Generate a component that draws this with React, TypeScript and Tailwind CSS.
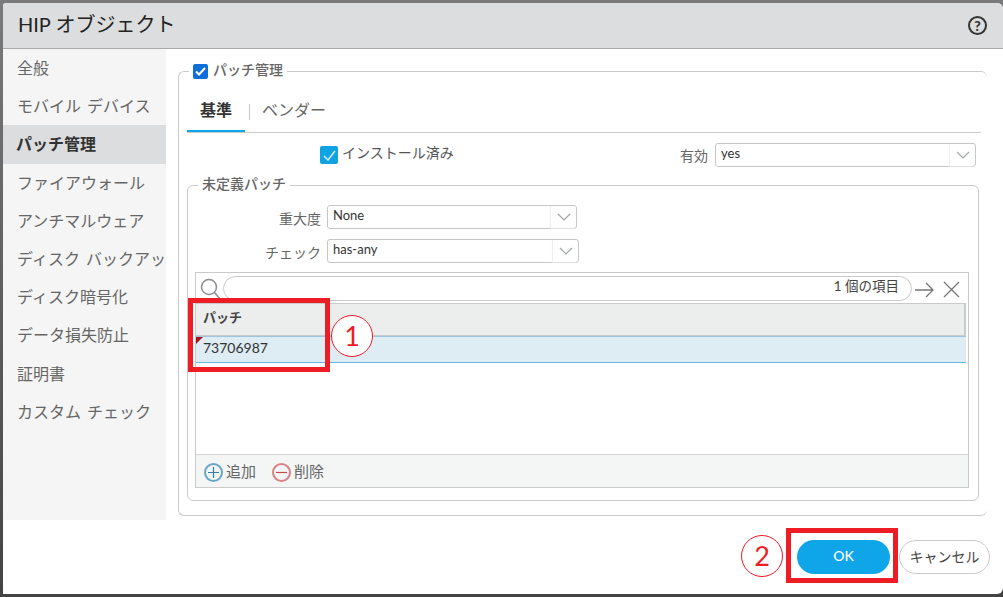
import type { ReactNode } from 'react';

const FONT = "font-['Lato','Noto_Sans_CJK_JP',sans-serif]";

const navItems = [
  '全般',
  'モバイル デバイス',
  'パッチ管理',
  'ファイアウォール',
  'アンチマルウェア',
  'ディスク バックアップ',
  'ディスク暗号化',
  'データ損失防止',
  '証明書',
  'カスタム チェック',
];

const Chevron = () => (
  <svg width="14" height="8" viewBox="0 0 14 8" fill="none" stroke="#a0a5a8" strokeWidth="1.2">
    <path d="M1 1l6 6 6-6" />
  </svg>
);

const Select = ({ value, className }: { value: string; className: string }) => (
  <div className={`flex h-6 rounded-[3px] border border-[#c4c6c8] bg-white ${className}`}>
    <div className="flex-1 pl-[5px] text-[13px] leading-[19px] text-[#333]">{value}</div>
    <div className="flex w-[26px] items-center justify-center rounded-r-[3px] border-l border-[#efefef] shadow-[0_1px_1px_#e4e5e6]">
      <Chevron />
    </div>
  </div>
);

const Field = ({
  label,
  className,
  legendClass,
  children,
}: {
  label: ReactNode;
  className: string;
  legendClass: string;
  children: ReactNode;
}) => (
  <fieldset className={`min-w-0 rounded-[6px] border border-[#c9cacb] ${className}`}>
    <legend className={`flex h-4 items-center gap-[5px] px-[4px] text-[14px] font-medium text-[#666] ${legendClass}`}>
      {label}
    </legend>
    {children}
  </fieldset>
);

const CircleNumber = ({ n, className }: { n: string; className: string }) => (
  <div
    className={`absolute flex h-[42px] w-[42px] items-center justify-center rounded-full border border-[#ee1c25] bg-white text-[27px] font-normal text-[#ee1c25] ${className}`}
  >
    {n}
  </div>
);

export default function App() {
  return (
    <div className={`relative h-[597px] w-[1003px] overflow-hidden bg-gradient-to-b from-[#7a7a7a] to-[#444] pb-[3px] pl-[3px] pt-[3px] ${FONT}`}>
      <div className="flex h-full flex-col overflow-hidden rounded-r-[6px] rounded-tl-[3px] bg-white">
        {/* Title bar */}
        <div className="flex h-[46px] shrink-0 items-center justify-between border-b border-[#a9abae] bg-[#dcddde] pl-[15px] pr-[16px]">
          <span className="pb-[4px] text-[20px] text-[#222]">HIP オブジェクト</span>
          <div className="flex h-[19px] w-[19px] items-center justify-center rounded-full border-2 border-[#333] text-[14px] font-black leading-none text-[#333]">
            ?
          </div>
        </div>

        <div className="flex h-[471px] shrink-0">
          {/* Side nav */}
          <div className="w-[163px] shrink-0 overflow-hidden bg-[#f5f5f5]">
            {navItems.map((item) => (
              <div
                key={item}
                className={
                  item === 'パッチ管理'
                    ? 'flex h-[38.2px] items-center whitespace-nowrap bg-[#dcddde] pl-[13px] text-[16px] font-bold text-[#333]'
                    : 'flex h-[38.2px] items-center whitespace-nowrap pl-[14px] text-[16px] text-[#666] [word-spacing:2px]'
                }
              >
                {item}
              </div>
            ))}
          </div>

          {/* Form */}
          <div className="flex-1 pl-[12px] pr-[16px] pt-[14px]">
            <Field
              className="border-r-0 pl-[8px]"
              legendClass="ml-[2px]"
              label={
                <>
                  <span className="flex h-[15px] w-[15px] items-center justify-center rounded-[2px] bg-[#0f6fd8]">
                    <svg width="11" height="9" viewBox="0 0 11 9" fill="none" stroke="#fff" strokeWidth="2">
                      <path d="M1 4.5l3 3 6-6.5" />
                    </svg>
                  </span>
                  <span className="pb-[3px]">パッチ管理</span>
                </>
              }
            >
              {/* Tabs */}
              <div className="mr-[6px] mt-[11px] flex h-[43px] border-b border-[#c9cacb]">
                <div className="flex h-[42px] w-[58px] items-center justify-center border-b-2 border-[#0ea5e9] pb-[1px] text-[16px] font-bold text-[#333]">
                  基準
                </div>
                <div className="ml-[4px] mt-[14px] h-4 w-px bg-[#c9cacb]" />
                <div className="ml-[12px] flex h-[41px] items-center pb-[2px] text-[16px] text-[#666]">ベンダー</div>
              </div>

              {/* Installed + enabled */}
              <div className="mr-[11px] mt-[10px] flex h-6 items-center">
                <span className="ml-[133px] flex h-[18px] w-[18px] items-center justify-center rounded-[2px] bg-[#0fa3e4]">
                  <svg width="13" height="11" viewBox="0 0 13 11" fill="none" stroke="#d8eefa" strokeWidth="1.5">
                    <path d="M1 6l4 4 7-9" />
                  </svg>
                </span>
                <span className="ml-[4px] pb-[6px] text-[14px] text-[#555]">インストール済み</span>
                <span className="ml-auto mr-[7px] text-[14px] text-[#666]">有効</span>
                <Select value="yes" className="w-[261px]" />
              </div>

              {/* Undefined patches */}
              <Field
                label={<span className="pb-[3px]">未定義パッチ</span>}
                legendClass="ml-[3px]"
                className="mb-[14px] mr-[8px] mt-[10px] px-[7px] pb-[12px]"
              >
                <div className="mt-[12px] flex h-6 items-center">
                  <span className="w-[132px] pr-[6px] pt-[2px] text-right text-[14px] text-[#666]">重大度</span>
                  <Select value="None" className="w-[250px]" />
                </div>
                <div className="mt-[10px] flex h-6 items-center">
                  <span className="w-[132px] pr-[6px] pt-[2px] text-right text-[14px] text-[#666]">チェック</span>
                  <Select value="has-any" className="w-[252px]" />
                </div>

                {/* Grid */}
                <div className="mt-[9px] flex h-[216px] w-[774px] flex-col border border-[#c9cacb]">
                  <div className="flex h-[30px] shrink-0 items-start overflow-hidden">
                    <svg className="ml-[4px] mt-[5px] shrink-0" width="22" height="24" viewBox="0 0 22 24" fill="none" stroke="#8b8f92" strokeWidth="1.5">
                      <circle cx="9" cy="9" r="7.5" />
                      <path d="M14.5 14.5l6 7" />
                    </svg>
                    <div className="ml-[1px] mt-[3px] flex h-[25px] w-[689px] shrink-0 items-center justify-end rounded-full border border-[#c9cacb] pb-[4px] pr-[12px] text-[13.5px] text-[#444]">
                      1 個の項目
                    </div>
                    <svg className="ml-[3px] mt-[9px] shrink-0" width="19" height="16" viewBox="0 0 19 16" fill="none" stroke="#777" strokeWidth="1.3">
                      <path d="M0 8h18M11 1l7 7-7 7" />
                    </svg>
                    <svg className="ml-[9px] mt-[8px] shrink-0" width="17" height="17" viewBox="0 0 17 17" fill="none" stroke="#777" strokeWidth="1.3">
                      <path d="M1 1l15 15M16 1L1 16" />
                    </svg>
                  </div>
                  <div className="mr-[2px] flex h-[33px] shrink-0 items-center border-y border-r-2 border-[#c9cacb] bg-[#eceded] pb-[4px] pl-[7px] text-[13px] font-bold text-[#444]">
                    パッチ
                  </div>
                  <div className="relative mr-[2px] flex h-[27px] shrink-0 items-center border-y border-t-[#9dc6dc] border-b-[#64b5e0] bg-[#deecf4] pb-[5px] pl-[7px] text-[14px] text-[#333]">
                    <span className="absolute left-0 top-0 h-0 w-0 border-r-[7px] border-t-[7px] border-r-transparent border-t-[#a31621]" />
                    73706987
                  </div>
                  <div className="flex-1" />
                  <div className="flex h-[33px] shrink-0 items-center border-t border-[#d5d6d7] bg-[#f4f6f6] pl-[8px] text-[15px] text-[#666]">
                    <span className="mt-[3px] flex h-[19px] w-[19px] items-center justify-center rounded-full border-2 border-[#6ba6c6]">
                      <svg width="11" height="11" viewBox="0 0 11 11" stroke="#2f7fa8" strokeWidth="1.2">
                        <path d="M5.5 0v11M0 5.5h11" />
                      </svg>
                    </span>
                    <span className="ml-[3px]">追加</span>
                    <span className="ml-[16px] mt-[3px] flex h-[19px] w-[19px] items-center justify-center rounded-full border-2 border-[#d98286]">
                      <svg width="11" height="11" viewBox="0 0 11 11" stroke="#c9474d" strokeWidth="1.2">
                        <path d="M0 5.5h11" />
                      </svg>
                    </span>
                    <span className="ml-[3px]">削除</span>
                  </div>
                </div>
              </Field>
            </Field>
          </div>
        </div>

        {/* Footer buttons */}
        <div className="flex justify-end gap-[9px] pr-[13px] pt-[20px]">
          <div className="flex h-[34px] w-[93px] items-center justify-center rounded-full bg-[#0ea5e9] pb-[3px] text-[14px] font-medium text-white">
            OK
          </div>
          <div className="flex h-[34px] w-[91px] items-center justify-center rounded-full border border-[#c9cacb] pb-[2px] text-[14px] text-[#444]">
            キャンセル
          </div>
        </div>
      </div>

      {/* Red annotations on top of the screenshot */}
      <div className="absolute left-[188px] top-[298px] h-[74px] w-[142px] border-[5px] border-[#ee1c25]" />
      <CircleNumber n="1" className="left-[331px] top-[315px]" />
      <div className="absolute left-[786px] top-[528px] h-[55px] w-[112px] border-[5px] border-[#ee1c25]" />
      <CircleNumber n="2" className="left-[741px] top-[535px]" />
    </div>
  );
}
